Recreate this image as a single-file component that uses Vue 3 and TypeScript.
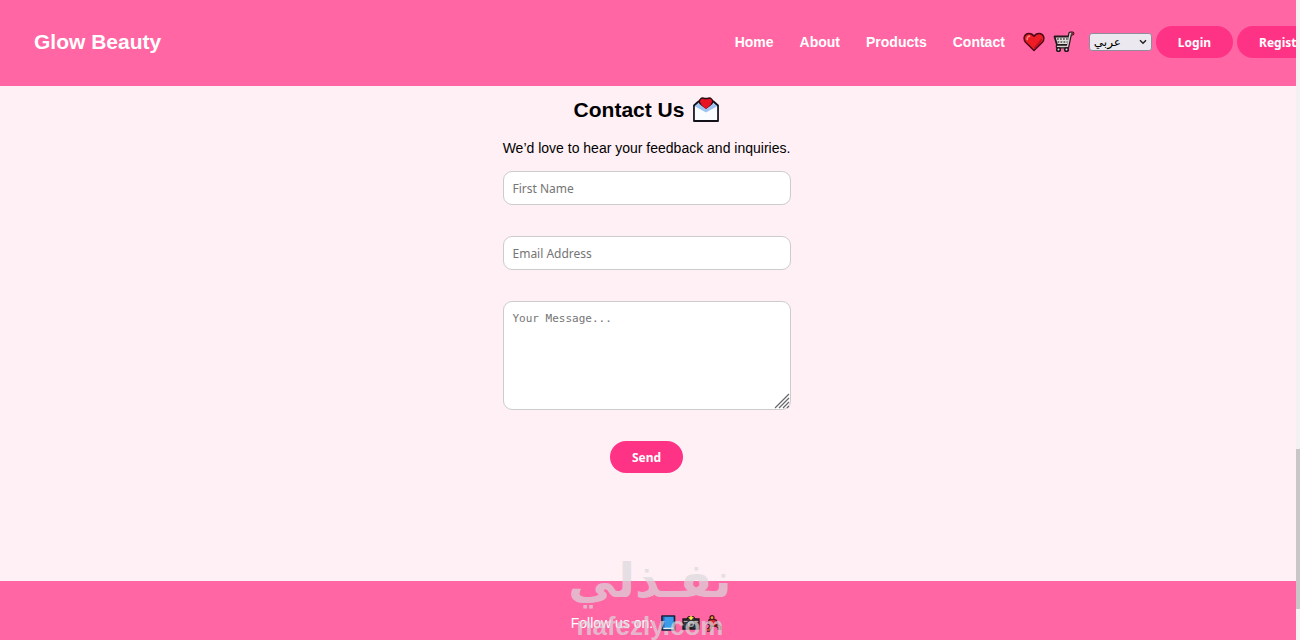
<script setup lang="ts">
import { ref } from 'vue'

const links: string[] = ['Home', 'About', 'Products', 'Contact']
const language = ref<string>('ar')
const firstName = ref<string>('')
const email = ref<string>('')
const message = ref<string>('')
</script>

<template>
  <div class="window">
    <div class="page">
      <header class="header">
        <div class="logo">Glow Beauty</div>
        <div class="tools">
          <nav class="nav">
            <a v-for="link in links" :key="link" :href="'#' + link.toLowerCase()">{{ link }}</a>
          </nav>
          <a class="icon heart" href="#favorites" aria-label="Favorites">
            <svg width="22" height="20" viewBox="0 0 22 20">
              <path d="M11 18.500 2.600 10.200C-.3 6.600 1.400 1.600 5.700 1.400 8 1.300 9.800 2.300 11 4.300 12.200 2.300 14 1.300 16.300 1.400 20.600 1.600 22.300 6.600 19.400 10.200Z" fill="#ee1c25" stroke="#4d0a18" stroke-width="1.500" stroke-linejoin="round" />
              <path d="M4.200 7.500C3.900 5.500 5 4.300 6.500 4.100" fill="none" stroke="#ff8585" stroke-width="1.600" stroke-linecap="round" />
              <path d="M18.500 7c-.5 2.500-3.500 5-7 9" fill="none" stroke="#b9101f" stroke-width="1.500" />
            </svg>
          </a>
          <a class="icon cart" href="#cart" aria-label="Cart">
            <svg width="22" height="22" viewBox="0 0 22 22">
              <path d="M19.500 2.500h-2.300L14.500 15.500H4.500" fill="none" stroke="#26181f" stroke-width="3.800" stroke-linecap="round" stroke-linejoin="round" />
              <path d="M1.500 5.500h15.200l-1.700 8.500H4Z" fill="#dededb" stroke="#26181f" stroke-width="1.800" stroke-linejoin="round" />
              <path d="M4 8h11M4.500 11h10" fill="none" stroke="#55504f" stroke-width="1.400" stroke-dasharray="1.800 1.200" />
              <path d="M19.500 2.500h-2.300L14.500 15.500H4.500" fill="none" stroke="#d4d1cf" stroke-width="1.400" stroke-linecap="round" stroke-linejoin="round" />
              <circle cx="5.500" cy="18.500" r="1.800" fill="#ddd" stroke="#26181f" stroke-width="1.600" />
              <circle cx="13.500" cy="18.500" r="1.800" fill="#ddd" stroke="#26181f" stroke-width="1.600" />
              <path d="M19 2.500h.8" stroke="#a3162c" stroke-width="2" stroke-linecap="round" />
            </svg>
          </a>
          <div class="language">
            <select v-model="language" aria-label="Language">
              <option value="ar">عربي</option>
              <option value="en">English</option>
            </select>
            <svg class="chevron" width="8" height="6" viewBox="0 0 8 6">
              <path d="M1 1.200 4 4.300 7 1.200" fill="none" stroke="#222" stroke-width="1.400" />
            </svg>
          </div>
          <button class="pill" type="button">Login</button>
          <button class="pill" type="button">Register</button>
        </div>
      </header>

      <main class="contact">
        <h2>
          <span>Contact Us</span>
          <svg width="26" height="26" viewBox="0 0 26 26">
            <path d="M1 8.500 5.500 4.500h15L25 8.500V24H1Z" fill="#a9cdf5" stroke="#121018" stroke-width="1.800" stroke-linejoin="round" />
            <path d="M13 11.500 7 6.500C5 3 8.500 0 11.600 1.500h2.800C17.500 0 21 3 19 6.500Z" fill="#e81224" stroke="#2a0b14" stroke-width="1.400" />
            <path d="M13 12.300 7.700 7h10.600Z" fill="#e81224" />
            <path d="M1.900 9.300 13 15.500l11.100-6.200V23.100H1.900Z" fill="#fbfcff" />
            <path d="m1.900 9 11.100 6 11.100-6-4.100-1.500-7 4.700-7-4.700Z" fill="#9fc3f0" />
          </svg>
        </h2>
        <p>We’d love to hear your feedback and inquiries.</p>
        <form @submit.prevent>
          <input v-model="firstName" type="text" placeholder="First Name" aria-label="First Name" />
          <input v-model="email" type="email" placeholder="Email Address" aria-label="Email Address" />
          <div class="message">
            <textarea v-model="message" placeholder="Your Message..." aria-label="Your Message"></textarea>
            <svg class="grip" width="16" height="16" viewBox="0 0 16 16">
              <path d="M1 15 15 1M5 15 15 5M9 15l6-6M13 15l2-2" fill="none" stroke="#66666c" stroke-width="1.200" />
            </svg>
          </div>
          <button class="pill" type="submit">Send</button>
        </form>
      </main>

      <footer class="footer">
        <span>Follow us on:</span>
        <a href="#facebook" aria-label="Facebook">
          <svg width="15" height="16" viewBox="0 0 15 16">
            <path d="M1 1h12.500v14H1Z" fill="#3b9cec" stroke="#14233f" stroke-width="1.700" stroke-linejoin="round" />
            <path d="M2.500 12.700h10.200v1.400H2.500Z" fill="#e6edf5" />
            <path d="M2.800 2v10.500" stroke="#1c68b3" stroke-width="1.400" />
          </svg>
        </a>
        <a href="#instagram" aria-label="Instagram">
          <svg width="18" height="16" viewBox="0 0 18 16">
            <path d="M1 4h4l1.500-2h5L13 4h4v10H1Z" fill="#3a373b" stroke="#171519" stroke-width="1.300" />
            <path d="M1.700 6.500h14.600" stroke="#aaa" />
            <circle cx="9" cy="9" r="3.800" fill="#9b9aa0" stroke="#171519" />
            <circle cx="9" cy="9" r="1.700" fill="#3c4650" />
            <path d="m9 0 1 2 2 .5-1.700 1.300L9 5.500 7.700 3.800 6 2.500 8 2Z" fill="#ffe14a" />
          </svg>
        </a>
        <a href="#tiktok" aria-label="TikTok">
          <svg width="16" height="17" viewBox="0 0 16 17">
            <path d="M5.500 10 3 15H1M9 9.500l4.500 2.500v3" fill="none" stroke="#35151a" stroke-width="3.600" stroke-linejoin="round" />
            <path d="M5.500 10 3 15H1M9 9.500l4.500 2.500v3" fill="none" stroke="#c0512c" stroke-width="1.800" />
            <path d="m3 5 3-1.500 4 1.500 2 4-2.500 2H5L2 9Z" fill="#df2634" stroke="#49151c" stroke-width="1.400" />
            <circle cx="6" cy="2.700" r="2" fill="#e9a23b" stroke="#49151c" stroke-width="1.200" />
          </svg>
        </a>
      </footer>
    </div>
    <div class="scrollbar"><div class="thumb"></div></div>
    <div class="watermark">
      <div class="mark-ar" lang="ar" dir="rtl">نفـذلي</div>
      <div class="mark-en">nafezly.com</div>
    </div>
  </div>
</template>

<style>
body {
  margin: 0;
  overflow: hidden;
}
</style>

<style scoped>
* {
  box-sizing: border-box;
}

.window {
  position: relative;
  display: flex;
  height: 100vh;
  overflow: hidden;
  font-family: "Liberation Sans", Arial, sans-serif;
  font-size: 14px;
  color: #000;
}

.page {
  flex: 1;
  min-width: 0;
  display: flex;
  flex-direction: column;
  overflow: hidden;
  background: #fff0f5;
}

.header {
  display: flex;
  flex-shrink: 0;
  align-items: center;
  justify-content: space-between;
  padding: 26px 0 28px 34px;
  overflow: hidden;
  background: #ff66a3;
}

.logo {
  font-size: 21px;
  font-weight: bold;
  color: #fff;
}

.tools {
  display: flex;
  flex-shrink: 0;
  align-items: center;
  margin-right: -35px;
}

.nav {
  display: flex;
  gap: 26px;
  margin-right: 18px;
}

.nav a {
  color: #fff;
  font-weight: bold;
  text-decoration: none;
}

.icon {
  display: flex;
}

.heart {
  margin-right: 8px;
}

.cart {
  margin-right: 14px;
}

.language {
  position: relative;
  display: flex;
  margin-right: 4px;
}

.language select {
  width: 63px;
  height: 18px;
  padding: 0 16px 0 4px;
  appearance: none;
  border: 1px solid #918c9c;
  border-radius: 3px;
  background: #ebe9ef;
  color: #000;
  font: 12px/16px "Liberation Sans", "DejaVu Sans", sans-serif;
}

.chevron {
  position: absolute;
  top: 6px;
  right: 5px;
  pointer-events: none;
}

.pill {
  height: 32px;
  padding: 0 22px;
  border: 0;
  border-radius: 16px;
  background: #ff3385;
  color: #fff;
  font: bold 12px "Noto Sans", sans-serif;
}

.pill + .pill {
  margin-left: 4px;
}

.contact {
  flex-shrink: 0;
  display: flex;
  flex-direction: column;
  align-items: center;
  padding: 11px 3px 108px 0;
}

h2 {
  display: flex;
  align-items: center;
  gap: 9px;
  margin: 0 0 16px;
  font-size: 21px;
  line-height: 26px;
}

p {
  margin: 0 0 14px;
  font-size: 14px;
  line-height: 18px;
}

form {
  display: flex;
  flex-direction: column;
  align-items: center;
  gap: 31px;
  width: 288px;
}

input,
textarea {
  display: block;
  width: 100%;
  padding: 8px 9px;
  border: 1px solid #ccc;
  border-radius: 9px;
  background: #fff;
  font: 12px/16px "Noto Sans", sans-serif;
}

input {
  height: 34px;
}

.message {
  position: relative;
  width: 100%;
}

textarea {
  height: 109px;
  resize: none;
  font: 11px/18px "DejaVu Sans Mono", monospace;
}

input::placeholder,
textarea::placeholder {
  color: #757575;
}

.grip {
  position: absolute;
  right: 1px;
  bottom: 1px;
  pointer-events: none;
}

.footer {
  flex: 1 0 auto;
  display: flex;
  align-items: flex-start;
  justify-content: center;
  gap: 6px;
  padding: 34px 3px 0 0;
  background: #ff66a3;
  color: #fff;
  line-height: 17px;
}

.footer span {
  margin-right: 2px;
}

.footer a {
  display: flex;
}

.scrollbar {
  display: flex;
  flex-direction: column;
  justify-content: flex-end;
  width: 4px;
  padding-bottom: 31px;
  background: #f4f1f3;
}

.thumb {
  height: 25vh;
  background: #cac6c8;
}

.watermark {
  position: absolute;
  bottom: 0;
  left: 50%;
  display: flex;
  flex-direction: column;
  align-items: center;
  gap: 8px;
  transform: translateX(-50%);
  color: #dbd8dc;
  opacity: 0.7;
  white-space: nowrap;
  pointer-events: none;
}

.mark-ar {
  font: bold 48px/48px "DejaVu Sans", sans-serif;
}

.mark-en {
  font: bold 26px/28px "Liberation Sans", sans-serif;
}
</style>
